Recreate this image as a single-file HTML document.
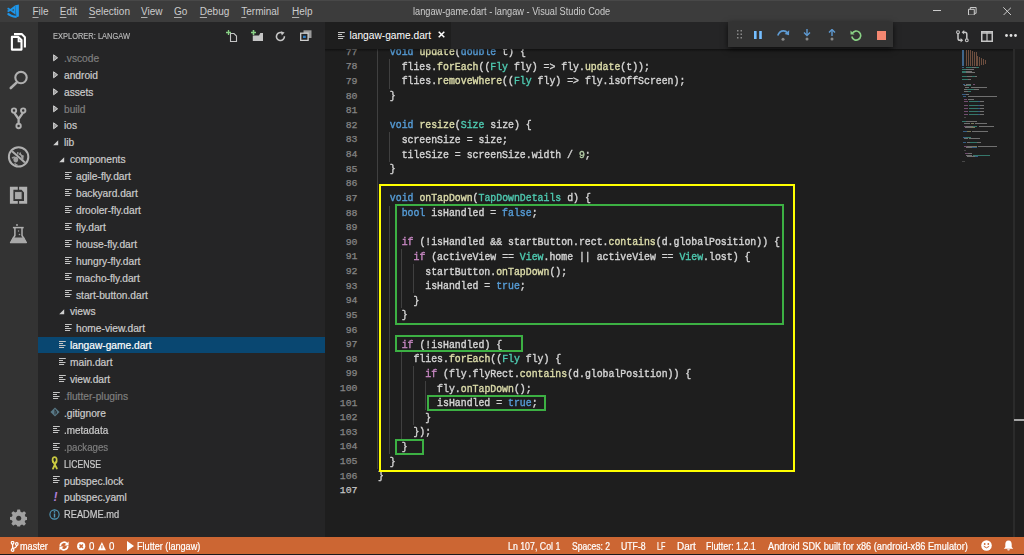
<!DOCTYPE html>
<html><head><meta charset="utf-8">
<style>
*{margin:0;padding:0;box-sizing:border-box}
html,body{width:1024px;height:555px;overflow:hidden;background:#1e1e1e;font-family:"Liberation Sans",sans-serif}
.abs{position:absolute}
#title{position:absolute;left:0;top:0;width:1024px;height:22px;background:#3c3c3c;color:#cccccc;font-size:10px}
#title .m{position:absolute;top:6.2px;line-height:12px;transform-origin:0 0;white-space:nowrap}
#title .m u{text-decoration:underline;text-underline-offset:1.5px;text-decoration-thickness:1px;text-decoration-color:#b0b0b0}
#title .tt{position:absolute;left:0;width:1024px;text-align:center;top:5px;line-height:12px;color:#cccccc}
#act{position:absolute;left:0;top:22px;width:38px;height:515px;background:#333333}
#side{position:absolute;left:38px;top:22px;width:287px;height:515px;background:#252526;color:#cccccc;font-size:10.2px}
#side .hd{position:absolute;top:8.2px;color:#bbbbbb;-webkit-text-stroke:0.15px #bbb;line-height:12px;transform-origin:0 0;white-space:nowrap}
.row{position:absolute;left:0;width:287px;height:16.91px;line-height:16.91px}
.row.sel{background:#094771;color:#ffffff}
.row.dim .nm{color:#7f7f7f}
.nm{position:absolute;top:1.8px;-webkit-text-stroke:0.2px currentColor;white-space:nowrap;transform-origin:0 0}
.tw{position:absolute;top:4.5px}
.ic{position:absolute;top:0}
.ic .fi{position:absolute;top:4.6px}
.row{color:#cccccc}
.ic.yaml{color:#b07fd8;font-weight:bold;font-style:italic;font-size:12px;top:0.8px}
#tabs{position:absolute;left:325px;top:22px;width:699px;height:27px;background:#252526}
#tab{position:absolute;left:0;top:0;width:126px;height:27px;background:#1e1e1e;color:#ffffff;font-size:10.2px}
#editor{position:absolute;left:325px;top:49px;width:699px;height:488px;background:#1e1e1e;overflow:hidden}
#code{position:absolute;left:0;top:0;width:1024px;height:537px;overflow:hidden;clip-path:inset(49px 0 0 325px)}
.ln{position:absolute;left:377.5px;height:14.62px;line-height:14.62px;font-family:"Liberation Mono",monospace;font-size:10.8px;transform:scaleX(0.9121);transform-origin:0 0;color:#d4d4d4;white-space:pre;-webkit-text-stroke:0.4px currentColor;margin-top:-0.5px}
.num{position:absolute;left:330px;width:27.5px;text-align:right;height:14.62px;line-height:14.62px;font-family:"Liberation Mono",monospace;font-size:9.87px;color:#858585;white-space:pre;-webkit-text-stroke:0.25px currentColor}
.num.act{color:#c6c6c6}
b{font-weight:normal}
b.k{color:#569cd6} b.c{color:#c586c0} b.t{color:#4ec9b0} b.f{color:#dcdcaa} b.n{color:#b5cea8}
.g{position:absolute;width:1px;height:14.62px;background:#404040}
.box{position:absolute;border:2px solid #3cb043}
#status{position:absolute;left:0;top:537px;width:1024px;height:17px;background:#cc6633;color:#ffffff;font-size:10px}
#status .s{position:absolute;top:2.9px;line-height:13px;white-space:nowrap;transform-origin:0 0;-webkit-text-stroke:0.2px #fff}
.s{transform-origin:0 0}
#bottomline{position:absolute;left:0;top:554px;width:1024px;height:1px;background:#1a1a1a}
#dbg{position:absolute;left:728px;top:22px;width:165px;height:24.5px;background:#333333;box-shadow:0 2px 6px rgba(0,0,0,0.7)}
</style></head><body>
<div id="title"><div class="abs" style="left:0;top:0;width:1024px;height:1px;background:#484848"></div><svg class="abs" style="left:0;top:0" width="26" height="22" viewBox="0 0 26 22"><path d="M15.4 5.2L18.9 4.6V16.6L16.4 17.3Z" fill="#1e95e8"/><path d="M7.8 13.4Q10 16.2 16.6 16.9" fill="none" stroke="#1e95e8" stroke-width="2.2"/><path d="M10.6 9.9L14.6 6.9V12.9Z" fill="none" stroke="#1e95e8" stroke-width="1.9"/><path d="M7.6 8.2L10.6 9.9L7.6 11.6" fill="none" stroke="#1e95e8" stroke-width="1.7"/></svg><span class="m" style="left:32.5px"><u>F</u>ile</span><span class="m" style="left:59.8px"><u>E</u>dit</span><span class="m" style="left:88.8px"><u>S</u>election</span><span class="m" style="left:141.0px"><u>V</u>iew</span><span class="m" style="left:174.0px"><u>G</u>o</span><span class="m" style="left:199.8px"><u>D</u>ebug</span><span class="m" style="left:241.3px"><u>T</u>erminal</span><span class="m" style="left:292.0px"><u>H</u>elp</span><span class="m" style="left:413.20px;font-size:10.00px;transform:scaleX(0.9199);">langaw-game.dart - langaw - Visual Studio Code</span><svg class="abs" style="left:932.7px;top:10px" width="8.6" height="1"><rect width="8.6" height="1" fill="#cccccc"/></svg><svg class="abs" style="left:968px;top:6.8px" width="8.6" height="8.6" viewBox="0 0 8.6 8.6"><path d="M0.5 2.3H6.3V8.1H0.5Z M2.3 2.3V0.5H8.1V6.3H6.3" fill="none" stroke="#cccccc" stroke-width="1"/></svg><svg class="abs" style="left:1002.8px;top:6.8px" width="8.6" height="8.6" viewBox="0 0 8.6 8.6"><path d="M0.3 0.3L8.3 8.3M8.3 0.3L0.3 8.3" stroke="#cccccc" stroke-width="1"/></svg><div class="abs" style="left:0;top:21.5px;width:1024px;height:1px;background:#303030"></div></div><div id="act"><svg class="abs" style="left:0;top:0" width="38" height="515" viewBox="0 0 38 515"><path d="M11.9 14.9H18.3L21.5 18.1V27.6H11.9Z" fill="none" stroke="#ffffff" stroke-width="2.1" stroke-linejoin="round"/><path d="M18.5 15.2V19.4H21.6" fill="none" stroke="#ffffff" stroke-width="1.7"/><path d="M14 12.1H21.7L24.9 15.3V25.5" fill="none" stroke="#ffffff" stroke-width="2.1" stroke-linejoin="round"/><circle cx="21" cy="55.6" r="5.7" fill="none" stroke="#b0b0b0" stroke-width="2.1"/><path d="M16.8 60.4L10.8 66" stroke="#b0b0b0" stroke-width="2.6" stroke-linecap="round"/><circle cx="14" cy="88.6" r="2.2" fill="none" stroke="#b0b0b0" stroke-width="1.9"/><circle cx="23.2" cy="88.6" r="2.2" fill="none" stroke="#b0b0b0" stroke-width="1.9"/><circle cx="18.6" cy="104" r="2.2" fill="none" stroke="#b0b0b0" stroke-width="1.9"/><path d="M14.3 90.8L18.6 97L22.9 90.8M18.6 97V101.8" fill="none" stroke="#b0b0b0" stroke-width="2.3"/><circle cx="18.6" cy="134.9" r="9.7" fill="none" stroke="#b0b0b0" stroke-width="2"/><path d="M12.1 129.2L24.9 140.6" stroke="#b0b0b0" stroke-width="2"/><ellipse cx="15.8" cy="137.6" rx="2.4" ry="2.8" fill="#a0a0a0"/><path d="M12 136.2Q13.5 134.6 15 135.2M14.6 141.2Q15.5 142.8 17.5 143M17.8 130V132.5M20.5 130.5L19.8 133M23.5 133.5L21 134.5M23.5 137L21.5 136.5" fill="none" stroke="#a0a0a0" stroke-width="1.3"/><path d="M19.5 131.5L23 135L21.5 136" fill="none" stroke="#a0a0a0" stroke-width="1.6"/><path d="M9.9 164.8H17.8V167.7H13.4V178.9H17.8V181.8H9.9Z" fill="#b0b0b0"/><path d="M19.1 164.8H27.2V181.8H19.1V178.9H24V170.5L21.5 167.7H19.1Z" fill="#b0b0b0"/><rect x="14.6" y="169.6" width="7.5" height="8" fill="#a8a8a8" stroke="#333333" stroke-width="0.9"/><path d="M12.9 205.6H23.7" stroke="#b0b0b0" stroke-width="1.5"/><path d="M14.9 206V213.5L10.6 220.6H26.3L22 213.5V206" fill="none" stroke="#b0b0b0" stroke-width="1.5" stroke-linejoin="round"/><path d="M12.6 215.5H24.3L26.4 221H10.4Z" fill="#a8a8a8"/><circle cx="17" cy="203" r="0.9" fill="#b0b0b0"/><circle cx="18.5" cy="209" r="0.7" fill="#a0a0a0"/><circle cx="19.5" cy="212.5" r="0.8" fill="#a0a0a0"/></svg><svg class="abs" style="left:9.7px;top:487.4px" width="17.4" height="17.4" viewBox="0 0 18 18"><path d="M7.6 0.5H10.4L10.9 2.8L12.6 3.5L14.6 2.2L16.6 4.2L15.3 6.2L16 7.9L18 8.4V11.2L15.9 11.6L15.2 13.3L16.5 15.3L14.5 17.3L12.5 16L10.8 16.7L10.4 18H7.6L7.1 16.7L5.4 16L3.4 17.3L1.4 15.3L2.7 13.3L2 11.6L0 11.2V8.4L2 7.9L2.7 6.2L1.4 4.2L3.4 2.2L5.4 3.5L7.1 2.8Z" fill="#a0a0a0"/><circle cx="9" cy="9.5" r="2.6" fill="#333333"/></svg></div><div id="side"><span class="hd" style="left:15.40px;font-size:9.20px;transform:scaleX(0.8148);">EXPLORER: LANGAW</span><svg class="abs" style="left:188px;top:8px" width="12" height="12" viewBox="0 0 12 12"><path d="M4.5 3.5H8L10.5 6V11.5H4.5Z" fill="none" stroke="#c5c5c5" stroke-width="1.1"/><path d="M2.5 0V5M0 2.5H5" stroke="#89d185" stroke-width="1.3"/></svg><svg class="abs" style="left:212.5px;top:8px" width="13" height="12" viewBox="0 0 13 12"><path d="M1.8 5.5H8L9.3 3H12V11H1.8Z" fill="#c5c5c5"/><path d="M2.5 0V5M0 2.5H5" stroke="#89d185" stroke-width="1.6"/></svg><svg class="abs" style="left:237px;top:9px" width="11" height="11" viewBox="0 0 11 11"><path d="M7.6 2.2A4 4 0 1 0 9.4 5.2" fill="none" stroke="#c5c5c5" stroke-width="1.6"/><path d="M5.8 0.2L9.6 1.6L6.8 4.4Z" fill="#c5c5c5"/></svg><svg class="abs" style="left:262px;top:8.4px" width="12" height="11" viewBox="0 0 12 11"><rect x="3.5" y="0.3" width="8" height="7.7" fill="#9a9a9a"/><rect x="0.7" y="3.2" width="7.4" height="7.2" fill="#252526" stroke="#d0d0d0" stroke-width="1.3"/><rect x="3" y="5.7" width="2.8" height="2.3" fill="#2f7fc8"/></svg><div class="row dim" style="top:27.03px"><svg class="tw" style="left:15.0px;top:5px" width="6" height="8" viewBox="0 0 6 8"><path d="M0.6 0.8L4.6 3.8L0.6 6.8Z" fill="#9a9a9a" stroke="#d0d0d0" stroke-width="1"/></svg><span class="nm" style="left:26px;transform:scaleX(1.000)">.vscode</span></div><div class="row" style="top:43.94px"><svg class="tw" style="left:15.0px;top:5px" width="6" height="8" viewBox="0 0 6 8"><path d="M0.6 0.8L4.6 3.8L0.6 6.8Z" fill="#9a9a9a" stroke="#d0d0d0" stroke-width="1"/></svg><span class="nm" style="left:26px;transform:scaleX(1.000)">android</span></div><div class="row" style="top:60.85px"><svg class="tw" style="left:15.0px;top:5px" width="6" height="8" viewBox="0 0 6 8"><path d="M0.6 0.8L4.6 3.8L0.6 6.8Z" fill="#9a9a9a" stroke="#d0d0d0" stroke-width="1"/></svg><span class="nm" style="left:26px;transform:scaleX(1.000)">assets</span></div><div class="row dim" style="top:77.76px"><svg class="tw" style="left:15.0px;top:5px" width="6" height="8" viewBox="0 0 6 8"><path d="M0.6 0.8L4.6 3.8L0.6 6.8Z" fill="#9a9a9a" stroke="#d0d0d0" stroke-width="1"/></svg><span class="nm" style="left:26px;transform:scaleX(1.000)">build</span></div><div class="row" style="top:94.67px"><svg class="tw" style="left:15.0px;top:5px" width="6" height="8" viewBox="0 0 6 8"><path d="M0.6 0.8L4.6 3.8L0.6 6.8Z" fill="#9a9a9a" stroke="#d0d0d0" stroke-width="1"/></svg><span class="nm" style="left:26px;transform:scaleX(1.000)">ios</span></div><div class="row" style="top:111.58px"><svg class="tw" style="left:15.2px;top:6.2px" width="6" height="6" viewBox="0 0 6 6"><path d="M5.2 0.2V5.2H0.2Z" fill="#d0d0d0"/></svg><span class="nm" style="left:26px;transform:scaleX(1.000)">lib</span></div><div class="row" style="top:128.49px"><svg class="tw" style="left:21.2px;top:6.2px" width="6" height="6" viewBox="0 0 6 6"><path d="M5.2 0.2V5.2H0.2Z" fill="#d0d0d0"/></svg><span class="nm" style="left:32px;transform:scaleX(1.000)">components</span></div><div class="row" style="top:145.40px"><span class="ic" style="left:27px"><svg class="fi" width="8" height="8" viewBox="0 0 8 8"><path d="M0 0.5h6.8M0 2.5h4M0 4.5h6.5M0 6.5h5.1" stroke="#c5c5c5" stroke-width="1.2"/></svg></span><span class="nm" style="left:38px;transform:scaleX(1.000)">agile-fly.dart</span></div><div class="row" style="top:162.31px"><span class="ic" style="left:27px"><svg class="fi" width="8" height="8" viewBox="0 0 8 8"><path d="M0 0.5h6.8M0 2.5h4M0 4.5h6.5M0 6.5h5.1" stroke="#c5c5c5" stroke-width="1.2"/></svg></span><span class="nm" style="left:38px;transform:scaleX(1.000)">backyard.dart</span></div><div class="row" style="top:179.22px"><span class="ic" style="left:27px"><svg class="fi" width="8" height="8" viewBox="0 0 8 8"><path d="M0 0.5h6.8M0 2.5h4M0 4.5h6.5M0 6.5h5.1" stroke="#c5c5c5" stroke-width="1.2"/></svg></span><span class="nm" style="left:38px;transform:scaleX(1.000)">drooler-fly.dart</span></div><div class="row" style="top:196.13px"><span class="ic" style="left:27px"><svg class="fi" width="8" height="8" viewBox="0 0 8 8"><path d="M0 0.5h6.8M0 2.5h4M0 4.5h6.5M0 6.5h5.1" stroke="#c5c5c5" stroke-width="1.2"/></svg></span><span class="nm" style="left:38px;transform:scaleX(1.000)">fly.dart</span></div><div class="row" style="top:213.04px"><span class="ic" style="left:27px"><svg class="fi" width="8" height="8" viewBox="0 0 8 8"><path d="M0 0.5h6.8M0 2.5h4M0 4.5h6.5M0 6.5h5.1" stroke="#c5c5c5" stroke-width="1.2"/></svg></span><span class="nm" style="left:38px;transform:scaleX(1.000)">house-fly.dart</span></div><div class="row" style="top:229.95px"><span class="ic" style="left:27px"><svg class="fi" width="8" height="8" viewBox="0 0 8 8"><path d="M0 0.5h6.8M0 2.5h4M0 4.5h6.5M0 6.5h5.1" stroke="#c5c5c5" stroke-width="1.2"/></svg></span><span class="nm" style="left:38px;transform:scaleX(1.000)">hungry-fly.dart</span></div><div class="row" style="top:246.86px"><span class="ic" style="left:27px"><svg class="fi" width="8" height="8" viewBox="0 0 8 8"><path d="M0 0.5h6.8M0 2.5h4M0 4.5h6.5M0 6.5h5.1" stroke="#c5c5c5" stroke-width="1.2"/></svg></span><span class="nm" style="left:38px;transform:scaleX(1.000)">macho-fly.dart</span></div><div class="row" style="top:263.77px"><span class="ic" style="left:27px"><svg class="fi" width="8" height="8" viewBox="0 0 8 8"><path d="M0 0.5h6.8M0 2.5h4M0 4.5h6.5M0 6.5h5.1" stroke="#c5c5c5" stroke-width="1.2"/></svg></span><span class="nm" style="left:38px;transform:scaleX(1.000)">start-button.dart</span></div><div class="row" style="top:280.68px"><svg class="tw" style="left:21.2px;top:6.2px" width="6" height="6" viewBox="0 0 6 6"><path d="M5.2 0.2V5.2H0.2Z" fill="#d0d0d0"/></svg><span class="nm" style="left:32px;transform:scaleX(1.000)">views</span></div><div class="row" style="top:297.59px"><span class="ic" style="left:27px"><svg class="fi" width="8" height="8" viewBox="0 0 8 8"><path d="M0 0.5h6.8M0 2.5h4M0 4.5h6.5M0 6.5h5.1" stroke="#c5c5c5" stroke-width="1.2"/></svg></span><span class="nm" style="left:38px;transform:scaleX(1.000)">home-view.dart</span></div><div class="row sel" style="top:314.50px"><span class="ic" style="left:21px"><svg class="fi" width="8" height="8" viewBox="0 0 8 8"><path d="M0 0.5h6.8M0 2.5h4M0 4.5h6.5M0 6.5h5.1" stroke="#c5c5c5" stroke-width="1.2"/></svg></span><span class="nm" style="left:32px;transform:scaleX(1.000)">langaw-game.dart</span></div><div class="row" style="top:331.41px"><span class="ic" style="left:21px"><svg class="fi" width="8" height="8" viewBox="0 0 8 8"><path d="M0 0.5h6.8M0 2.5h4M0 4.5h6.5M0 6.5h5.1" stroke="#c5c5c5" stroke-width="1.2"/></svg></span><span class="nm" style="left:32px;transform:scaleX(1.000)">main.dart</span></div><div class="row" style="top:348.32px"><span class="ic" style="left:21px"><svg class="fi" width="8" height="8" viewBox="0 0 8 8"><path d="M0 0.5h6.8M0 2.5h4M0 4.5h6.5M0 6.5h5.1" stroke="#c5c5c5" stroke-width="1.2"/></svg></span><span class="nm" style="left:32px;transform:scaleX(1.000)">view.dart</span></div><div class="row dim" style="top:365.23px"><span class="ic" style="left:15px"><svg class="fi" width="8" height="8" viewBox="0 0 8 8"><path d="M0 0.5h6.8M0 2.5h4M0 4.5h6.5M0 6.5h5.1" stroke="#c5c5c5" stroke-width="1.2"/></svg></span><span class="nm" style="left:26px;transform:scaleX(1.000)">.flutter-plugins</span></div><div class="row" style="top:382.14px"><svg class="tw" style="left:11.5px;top:3.3px" width="10" height="10" viewBox="0 0 10 10"><path d="M5 0.4L9.6 5L5 9.6L0.4 5Z" fill="#587886"/><path d="M5 2.6L6.4 4.5M5 2.6V7.6M6.4 4.5V6.6" stroke="#252526" stroke-width="0.9"/></svg><span class="nm" style="left:26px;transform:scaleX(1.000)">.gitignore</span></div><div class="row" style="top:399.05px"><span class="ic" style="left:15px"><svg class="fi" width="8" height="8" viewBox="0 0 8 8"><path d="M0 0.5h6.8M0 2.5h4M0 4.5h6.5M0 6.5h5.1" stroke="#c5c5c5" stroke-width="1.2"/></svg></span><span class="nm" style="left:26px;transform:scaleX(0.975)">.metadata</span></div><div class="row dim" style="top:415.96px"><span class="ic" style="left:15px"><svg class="fi" width="8" height="8" viewBox="0 0 8 8"><path d="M0 0.5h6.8M0 2.5h4M0 4.5h6.5M0 6.5h5.1" stroke="#c5c5c5" stroke-width="1.2"/></svg></span><span class="nm" style="left:26px;transform:scaleX(0.950)">.packages</span></div><div class="row" style="top:432.87px"><svg class="tw" style="left:13.0px;top:1.1px" width="8" height="14" viewBox="0 0 8 14"><path d="M2 6.6Q0.6 1.2 3.6 1.2Q6.6 1.2 5.3 6.6" fill="none" stroke="#cbcb41" stroke-width="1.7"/><path d="M5.3 5.6L2 12.6M2.2 5.6L5.8 12.4" fill="none" stroke="#cbcb41" stroke-width="1.9" stroke-linecap="round"/></svg><span class="nm" style="left:26px;transform:scaleX(0.850)">LICENSE</span></div><div class="row" style="top:449.78px"><span class="ic" style="left:15px"><svg class="fi" width="8" height="8" viewBox="0 0 8 8"><path d="M0 0.5h6.8M0 2.5h4M0 4.5h6.5M0 6.5h5.1" stroke="#c5c5c5" stroke-width="1.2"/></svg></span><span class="nm" style="left:26px;transform:scaleX(1.000)">pubspec.lock</span></div><div class="row" style="top:466.69px"><span class="ic yaml" style="left:15.4px">!</span><span class="nm" style="left:26px;transform:scaleX(1.000)">pubspec.yaml</span></div><div class="row" style="top:483.60px"><svg class="tw" style="left:11px;top:3px" width="11" height="11" viewBox="0 0 11 11"><circle cx="5.5" cy="5.5" r="4.6" fill="none" stroke="#519aba" stroke-width="1.1"/><path d="M5.5 4.5V8.5" stroke="#519aba" stroke-width="1.4"/><circle cx="5.5" cy="2.9" r="0.8" fill="#519aba"/></svg><span class="nm" style="left:26px;transform:scaleX(0.910)">README.md</span></div></div><div id="tabs"><div id="tab"><svg class="abs" style="left:13px;top:9.8px" width="8" height="8" viewBox="0 0 8 8"><path d="M0 0.5h6.8M0 2.5h4M0 4.5h6.5M0 6.5h5.1" stroke="#c5c5c5" stroke-width="1.2"/></svg><span class="abs" style="left:24.5px;top:8.2px;line-height:12px">langaw-game.dart</span><svg class="abs" style="left:112.5px;top:9px" width="7" height="7" viewBox="0 0 7 7"><path d="M0.7 0.7L6.3 6.3M6.3 0.7L0.7 6.3" stroke="#ffffff" stroke-width="1.5"/></svg></div><svg class="abs" style="left:631px;top:7.5px" width="13" height="13" viewBox="0 0 13 13"><circle cx="2" cy="2.2" r="1.4" fill="none" stroke="#c5c5c5" stroke-width="1.1"/><path d="M2 3.7V8.5Q2 10.3 4 10.3H5" fill="none" stroke="#c5c5c5" stroke-width="1.5"/><path d="M4.6 8L7.2 10.3L4.6 12.6Z" fill="#c5c5c5"/><circle cx="10.8" cy="10.3" r="1.4" fill="none" stroke="#c5c5c5" stroke-width="1.1"/><path d="M10.8 8.8V4.1Q10.8 2.3 8.8 2.3H7.8" fill="none" stroke="#c5c5c5" stroke-width="1.5"/><path d="M8.2 0L5.6 2.3L8.2 4.6Z" fill="#c5c5c5"/></svg><svg class="abs" style="left:655.5px;top:8.5px" width="12" height="11" viewBox="0 0 12 11"><rect x="0.75" y="0.75" width="10.5" height="9.5" fill="none" stroke="#c5c5c5" stroke-width="1.5"/><path d="M0.5 2H11.5" stroke="#c5c5c5" stroke-width="1.5"/><path d="M6 1V10.5" stroke="#c5c5c5" stroke-width="1.2"/></svg><svg class="abs" style="left:680px;top:12px" width="12" height="3" viewBox="0 0 12 3"><circle cx="1.5" cy="1.5" r="1.4" fill="#e0e0e0"/><circle cx="6" cy="1.5" r="1.4" fill="#e0e0e0"/><circle cx="10.5" cy="1.5" r="1.4" fill="#e0e0e0"/></svg></div><div id="editor"></div><div id="code"><i class="g" style="left:377px;top:44.75px"></i><i class="g" style="left:377px;top:59.37px"></i><i class="g" style="left:389px;top:59.37px"></i><i class="g" style="left:377px;top:73.99px"></i><i class="g" style="left:389px;top:73.99px"></i><i class="g" style="left:377px;top:88.61px"></i><i class="g" style="left:377px;top:103.23px"></i><i class="g" style="left:377px;top:117.85px"></i><i class="g" style="left:377px;top:132.47px"></i><i class="g" style="left:389px;top:132.47px"></i><i class="g" style="left:377px;top:147.09px"></i><i class="g" style="left:389px;top:147.09px"></i><i class="g" style="left:377px;top:161.71px"></i><i class="g" style="left:377px;top:176.33px"></i><i class="g" style="left:377px;top:190.95px"></i><i class="g" style="left:377px;top:205.57px"></i><i class="g" style="left:389px;top:205.57px"></i><i class="g" style="left:377px;top:220.19px"></i><i class="g" style="left:389px;top:220.19px"></i><i class="g" style="left:377px;top:234.81px"></i><i class="g" style="left:389px;top:234.81px"></i><i class="g" style="left:377px;top:249.43px"></i><i class="g" style="left:389px;top:249.43px"></i><i class="g" style="left:401px;top:249.43px"></i><i class="g" style="left:377px;top:264.05px"></i><i class="g" style="left:389px;top:264.05px"></i><i class="g" style="left:401px;top:264.05px"></i><i class="g" style="left:413px;top:264.05px"></i><i class="g" style="left:377px;top:278.67px"></i><i class="g" style="left:389px;top:278.67px"></i><i class="g" style="left:401px;top:278.67px"></i><i class="g" style="left:413px;top:278.67px"></i><i class="g" style="left:377px;top:293.29px"></i><i class="g" style="left:389px;top:293.29px"></i><i class="g" style="left:401px;top:293.29px"></i><i class="g" style="left:377px;top:307.91px"></i><i class="g" style="left:389px;top:307.91px"></i><i class="g" style="left:377px;top:322.53px"></i><i class="g" style="left:389px;top:322.53px"></i><i class="g" style="left:377px;top:337.15px"></i><i class="g" style="left:389px;top:337.15px"></i><i class="g" style="left:377px;top:351.77px"></i><i class="g" style="left:389px;top:351.77px"></i><i class="g" style="left:401px;top:351.77px"></i><i class="g" style="left:377px;top:366.39px"></i><i class="g" style="left:389px;top:366.39px"></i><i class="g" style="left:401px;top:366.39px"></i><i class="g" style="left:413px;top:366.39px"></i><i class="g" style="left:377px;top:381.01px"></i><i class="g" style="left:389px;top:381.01px"></i><i class="g" style="left:401px;top:381.01px"></i><i class="g" style="left:413px;top:381.01px"></i><i class="g" style="left:425px;top:381.01px"></i><i class="g" style="left:377px;top:395.63px"></i><i class="g" style="left:389px;top:395.63px"></i><i class="g" style="left:401px;top:395.63px"></i><i class="g" style="left:413px;top:395.63px"></i><i class="g" style="left:425px;top:395.63px"></i><i class="g" style="left:377px;top:410.25px"></i><i class="g" style="left:389px;top:410.25px"></i><i class="g" style="left:401px;top:410.25px"></i><i class="g" style="left:413px;top:410.25px"></i><i class="g" style="left:377px;top:424.87px"></i><i class="g" style="left:389px;top:424.87px"></i><i class="g" style="left:401px;top:424.87px"></i><i class="g" style="left:377px;top:439.49px"></i><i class="g" style="left:389px;top:439.49px"></i><i class="g" style="left:377px;top:454.11px"></i><div class="num" style="top:45.75px">77</div><div class="num" style="top:60.37px">78</div><div class="num" style="top:74.99px">79</div><div class="num" style="top:89.61px">80</div><div class="num" style="top:104.23px">81</div><div class="num" style="top:118.85px">82</div><div class="num" style="top:133.47px">83</div><div class="num" style="top:148.09px">84</div><div class="num" style="top:162.71px">85</div><div class="num" style="top:177.33px">86</div><div class="num" style="top:191.95px">87</div><div class="num" style="top:206.57px">88</div><div class="num" style="top:221.19px">89</div><div class="num" style="top:235.81px">90</div><div class="num" style="top:250.43px">91</div><div class="num" style="top:265.05px">92</div><div class="num" style="top:279.67px">93</div><div class="num" style="top:294.29px">94</div><div class="num" style="top:308.91px">95</div><div class="num" style="top:323.53px">96</div><div class="num" style="top:338.15px">97</div><div class="num" style="top:352.77px">98</div><div class="num" style="top:367.39px">99</div><div class="num" style="top:382.01px">100</div><div class="num" style="top:396.63px">101</div><div class="num" style="top:411.25px">102</div><div class="num" style="top:425.87px">103</div><div class="num" style="top:440.49px">104</div><div class="num" style="top:455.11px">105</div><div class="num" style="top:469.73px">106</div><div class="num act" style="top:484.35px">107</div><div class="ln" style="top:45.75px">  <b class="k">void</b> <b class="f">update</b>(<b class="k">double</b> t) {</div><div class="ln" style="top:60.37px">    flies.<b class="f">forEach</b>((<b class="t">Fly</b> fly) =&gt; fly.<b class="f">update</b>(t));</div><div class="ln" style="top:74.99px">    flies.<b class="f">removeWhere</b>((<b class="t">Fly</b> fly) =&gt; fly.isOffScreen);</div><div class="ln" style="top:89.61px">  }</div><div class="ln" style="top:104.23px"></div><div class="ln" style="top:118.85px">  <b class="k">void</b> <b class="f">resize</b>(<b class="t">Size</b> size) {</div><div class="ln" style="top:133.47px">    screenSize = size;</div><div class="ln" style="top:148.09px">    tileSize = screenSize.width / <b class="n">9</b>;</div><div class="ln" style="top:162.71px">  }</div><div class="ln" style="top:177.33px"></div><div class="ln" style="top:191.95px">  <b class="k">void</b> <b class="f">onTapDown</b>(<b class="t">TapDownDetails</b> d) {</div><div class="ln" style="top:206.57px">    <b class="k">bool</b> isHandled = <b class="k">false</b>;</div><div class="ln" style="top:221.19px"></div><div class="ln" style="top:235.81px">    <b class="c">if</b> (!isHandled &amp;&amp; startButton.rect.<b class="f">contains</b>(d.globalPosition)) {</div><div class="ln" style="top:250.43px">      <b class="c">if</b> (activeView == <b class="t">View</b>.home || activeView == <b class="t">View</b>.lost) {</div><div class="ln" style="top:265.05px">        startButton.<b class="f">onTapDown</b>();</div><div class="ln" style="top:279.67px">        isHandled = <b class="k">true</b>;</div><div class="ln" style="top:294.29px">      }</div><div class="ln" style="top:308.91px">    }</div><div class="ln" style="top:323.53px"></div><div class="ln" style="top:338.15px">    <b class="c">if</b> (!isHandled) {</div><div class="ln" style="top:352.77px">      flies.<b class="f">forEach</b>((<b class="t">Fly</b> fly) {</div><div class="ln" style="top:367.39px">        <b class="c">if</b> (fly.flyRect.<b class="f">contains</b>(d.globalPosition)) {</div><div class="ln" style="top:382.01px">          fly.<b class="f">onTapDown</b>();</div><div class="ln" style="top:396.63px">          isHandled = <b class="k">true</b>;</div><div class="ln" style="top:411.25px">        }</div><div class="ln" style="top:425.87px">      });</div><div class="ln" style="top:440.49px">    }</div><div class="ln" style="top:455.11px">  }</div><div class="ln" style="top:469.73px">}</div><div class="ln" style="top:484.35px"></div></div><div class="abs" style="left:325px;top:49px;width:688px;height:3px;background:linear-gradient(rgba(0,0,0,0.45),rgba(0,0,0,0))"></div><div class="abs" style="left:1013px;top:49px;width:1.5px;height:488px;background:#2b2b2b"></div><div class="abs" style="left:1014px;top:419px;width:10px;height:1.7px;background:#a5a5a5"></div><div style="position:absolute;left:0;top:0;width:1024px;height:555px;filter:blur(0.45px);opacity:0.75"><i style="position:absolute;left:962px;top:67.3px;width:2px;height:1px;background:#3f74a6"></i><i style="position:absolute;left:966px;top:67.3px;width:6px;height:1px;background:#3d9585"></i><i style="position:absolute;left:972px;top:67.3px;width:4px;height:1px;background:#8c8c8c"></i><i style="position:absolute;left:976px;top:67.3px;width:3px;height:1px;background:#3d9585"></i><i style="position:absolute;left:962px;top:69.0px;width:4px;height:1px;background:#3d9585"></i><i style="position:absolute;left:966px;top:69.0px;width:8px;height:1px;background:#8c8c8c"></i><i style="position:absolute;left:962px;top:70.5px;width:4px;height:1px;background:#3d9585"></i><i style="position:absolute;left:966px;top:70.5px;width:6px;height:1px;background:#8c8c8c"></i><i style="position:absolute;left:962px;top:72.0px;width:4px;height:1px;background:#3d9585"></i><i style="position:absolute;left:966px;top:72.0px;width:9px;height:1px;background:#8c8c8c"></i><i style="position:absolute;left:962px;top:75.5px;width:5px;height:1px;background:#3d9585"></i><i style="position:absolute;left:967px;top:75.5px;width:5px;height:1px;background:#8c8c8c"></i><i style="position:absolute;left:972px;top:75.5px;width:3px;height:1px;background:#3d9585"></i><i style="position:absolute;left:975px;top:75.5px;width:2px;height:1px;background:#8c8c8c"></i><i style="position:absolute;left:962px;top:79.0px;width:6px;height:1px;background:#3d9585"></i><i style="position:absolute;left:968px;top:79.0px;width:3px;height:1px;background:#8c8c8c"></i><i style="position:absolute;left:963px;top:83.5px;width:2px;height:1px;background:#3f74a6"></i><i style="position:absolute;left:966px;top:83.5px;width:5px;height:1px;background:#8c8c8c"></i><i style="position:absolute;left:973px;top:83.5px;width:2px;height:1px;background:#8f5f8c"></i><i style="position:absolute;left:964px;top:85.0px;width:3px;height:1px;background:#8c8c8c"></i><i style="position:absolute;left:967px;top:85.0px;width:4px;height:1px;background:#3d9585"></i><i style="position:absolute;left:965px;top:86.5px;width:4px;height:1px;background:#8c8c8c"></i><i style="position:absolute;left:971px;top:86.5px;width:16px;height:1px;background:#8c8c8c"></i><i style="position:absolute;left:964px;top:89.0px;width:3px;height:1px;background:#8c8c8c"></i><i style="position:absolute;left:967px;top:89.0px;width:7px;height:1px;background:#3d9585"></i><i style="position:absolute;left:974px;top:89.0px;width:5px;height:1px;background:#8c8c8c"></i><i style="position:absolute;left:964px;top:90.5px;width:4px;height:1px;background:#8c8c8c"></i><i style="position:absolute;left:968px;top:90.5px;width:3px;height:1px;background:#3d9585"></i><i style="position:absolute;left:962px;top:94.0px;width:4px;height:1px;background:#3f74a6"></i><i style="position:absolute;left:966px;top:94.0px;width:3px;height:1px;background:#8c8c8c"></i><i style="position:absolute;left:963px;top:95.5px;width:3px;height:1px;background:#3f74a6"></i><i style="position:absolute;left:968px;top:95.5px;width:29px;height:1px;background:#8c8c8c"></i><i style="position:absolute;left:964px;top:98.5px;width:3px;height:1px;background:#8f5f8c"></i><i style="position:absolute;left:968px;top:98.5px;width:6px;height:1px;background:#8c8c8c"></i><i style="position:absolute;left:964px;top:101.2px;width:4px;height:1px;background:#8f5f8c"></i><i style="position:absolute;left:969px;top:101.2px;width:9px;height:1px;background:#3d9585"></i><i style="position:absolute;left:978px;top:101.2px;width:2px;height:1px;background:#3f74a6"></i><i style="position:absolute;left:980px;top:101.2px;width:4px;height:1px;background:#8c8c8c"></i><i style="position:absolute;left:964px;top:104.5px;width:4px;height:1px;background:#8f5f8c"></i><i style="position:absolute;left:969px;top:104.5px;width:9px;height:1px;background:#3d9585"></i><i style="position:absolute;left:978px;top:104.5px;width:2px;height:1px;background:#3f74a6"></i><i style="position:absolute;left:980px;top:104.5px;width:4px;height:1px;background:#8c8c8c"></i><i style="position:absolute;left:964px;top:107.7px;width:4px;height:1px;background:#8f5f8c"></i><i style="position:absolute;left:969px;top:107.7px;width:9px;height:1px;background:#3d9585"></i><i style="position:absolute;left:978px;top:107.7px;width:2px;height:1px;background:#3f74a6"></i><i style="position:absolute;left:980px;top:107.7px;width:4px;height:1px;background:#8c8c8c"></i><i style="position:absolute;left:964px;top:110.9px;width:4px;height:1px;background:#8f5f8c"></i><i style="position:absolute;left:969px;top:110.9px;width:9px;height:1px;background:#3d9585"></i><i style="position:absolute;left:978px;top:110.9px;width:2px;height:1px;background:#3f74a6"></i><i style="position:absolute;left:980px;top:110.9px;width:4px;height:1px;background:#8c8c8c"></i><i style="position:absolute;left:964px;top:114.2px;width:4px;height:1px;background:#8f5f8c"></i><i style="position:absolute;left:969px;top:114.2px;width:9px;height:1px;background:#3d9585"></i><i style="position:absolute;left:978px;top:114.2px;width:2px;height:1px;background:#3f74a6"></i><i style="position:absolute;left:980px;top:114.2px;width:4px;height:1px;background:#8c8c8c"></i><i style="position:absolute;left:962px;top:120.5px;width:4px;height:1px;background:#3d9585"></i><i style="position:absolute;left:966px;top:120.5px;width:11px;height:1px;background:#8c8c8c"></i><i style="position:absolute;left:964px;top:122.5px;width:6px;height:1px;background:#8c8c8c"></i><i style="position:absolute;left:971px;top:122.5px;width:3px;height:1px;background:#9a9a70"></i><i style="position:absolute;left:975px;top:122.5px;width:12px;height:1px;background:#8c8c8c"></i><i style="position:absolute;left:964px;top:125.5px;width:2px;height:1px;background:#8f5f8c"></i><i style="position:absolute;left:966px;top:125.5px;width:7px;height:1px;background:#8c8c8c"></i><i style="position:absolute;left:973px;top:125.5px;width:4px;height:1px;background:#3d9585"></i><i style="position:absolute;left:979px;top:125.5px;width:15px;height:1px;background:#8c8c8c"></i><i style="position:absolute;left:965px;top:127.0px;width:6px;height:1px;background:#8c8c8c"></i><i style="position:absolute;left:971px;top:127.0px;width:4px;height:1px;background:#9a9a70"></i><i style="position:absolute;left:963px;top:130.5px;width:4px;height:1px;background:#3f74a6"></i><i style="position:absolute;left:967px;top:130.5px;width:4px;height:1px;background:#9a9a70"></i><i style="position:absolute;left:972px;top:130.5px;width:16px;height:1px;background:#8c8c8c"></i><i style="position:absolute;left:963px;top:136.5px;width:3px;height:1px;background:#3f74a6"></i><i style="position:absolute;left:966px;top:136.5px;width:5px;height:1px;background:#3d9585"></i><i style="position:absolute;left:964px;top:138.0px;width:4px;height:1px;background:#8c8c8c"></i><i style="position:absolute;left:969px;top:138.0px;width:11px;height:1px;background:#8c8c8c"></i><i style="position:absolute;left:963px;top:142.0px;width:3px;height:1px;background:#3f74a6"></i><i style="position:absolute;left:967px;top:142.0px;width:3px;height:1px;background:#8c8c8c"></i><i style="position:absolute;left:970px;top:142.0px;width:7px;height:1px;background:#3d9585"></i><i style="position:absolute;left:977px;top:142.0px;width:4px;height:1px;background:#8c8c8c"></i><i style="position:absolute;left:964px;top:145.5px;width:3px;height:1px;background:#8f5f8c"></i><i style="position:absolute;left:967px;top:145.5px;width:6px;height:1px;background:#8c8c8c"></i><i style="position:absolute;left:973px;top:145.5px;width:4px;height:1px;background:#9a9a70"></i><i style="position:absolute;left:978px;top:145.5px;width:19px;height:1px;background:#8c8c8c"></i><i style="position:absolute;left:966px;top:147.0px;width:6px;height:1px;background:#8c8c8c"></i><i style="position:absolute;left:972px;top:147.0px;width:5px;height:1px;background:#3f74a6"></i><i style="position:absolute;left:965px;top:153.0px;width:3px;height:1px;background:#8f5f8c"></i><i style="position:absolute;left:968px;top:153.0px;width:4px;height:1px;background:#8c8c8c"></i><i style="position:absolute;left:966px;top:154.5px;width:6px;height:1px;background:#8c8c8c"></i><i style="position:absolute;left:973px;top:154.5px;width:17px;height:1px;background:#3d9585"></i><i style="position:absolute;left:967px;top:156.0px;width:8px;height:1px;background:#8c8c8c"></i><i style="position:absolute;left:975px;top:156.0px;width:3px;height:1px;background:#3f74a6"></i><i style="position:absolute;left:962px;top:49.5px;width:2px;height:16px;background:#4a7eb0"></i><i style="position:absolute;left:965.5px;top:49.5px;width:1.2px;height:16.0px;background:#9c6b52;opacity:0.85"></i><i style="position:absolute;left:967.5px;top:50.0px;width:1.2px;height:15.5px;background:#9c6b52;opacity:0.85"></i><i style="position:absolute;left:969.5px;top:49.5px;width:1.2px;height:16.0px;background:#9c6b52;opacity:0.85"></i><i style="position:absolute;left:971.5px;top:51.0px;width:1.2px;height:14.5px;background:#9c6b52;opacity:0.85"></i><i style="position:absolute;left:973.5px;top:52.0px;width:1.2px;height:13.5px;background:#9c6b52;opacity:0.85"></i><i style="position:absolute;left:975.5px;top:52.0px;width:1.2px;height:13.5px;background:#9c6b52;opacity:0.85"></i><i style="position:absolute;left:977.0px;top:56.0px;width:1.2px;height:9.5px;background:#9c6b52;opacity:0.85"></i><i style="position:absolute;left:979.0px;top:57.0px;width:1.2px;height:8.5px;background:#9c6b52;opacity:0.85"></i><i style="position:absolute;left:981.0px;top:58.0px;width:1.2px;height:7.0px;background:#9c6b52;opacity:0.85"></i><i style="position:absolute;left:983.0px;top:59.0px;width:1.2px;height:6.0px;background:#9c6b52;opacity:0.85"></i><i style="position:absolute;left:985.0px;top:60.0px;width:1.2px;height:4.0px;background:#9c6b52;opacity:0.85"></i><i style="position:absolute;left:964px;top:117.0px;width:2px;height:1px;background:#555"></i><i style="position:absolute;left:964px;top:150.0px;width:2px;height:1px;background:#555"></i><i style="position:absolute;left:962px;top:160.5px;width:3px;height:1px;background:#555"></i></div><div class="box" style="border-color:#ffff00;left:379px;top:184px;width:416px;height:288px"></div><div class="box" style="left:395px;top:204px;width:389px;height:121px"></div><div class="box" style="left:395px;top:335px;width:128px;height:17px"></div><div class="box" style="left:427px;top:394.5px;width:119px;height:16.5px"></div><div class="box" style="left:395px;top:439px;width:29px;height:15.5px"></div><div id="dbg"><svg class="abs" style="left:8.5px;top:8px" width="6" height="9" viewBox="0 0 6 9"><g fill="#8a8a8a"><rect x="0" y="0" width="1.5" height="1.5"/><rect x="3.5" y="0" width="1.5" height="1.5"/><rect x="0" y="3.5" width="1.5" height="1.5"/><rect x="3.5" y="3.5" width="1.5" height="1.5"/><rect x="0" y="7" width="1.5" height="1.5"/><rect x="3.5" y="7" width="1.5" height="1.5"/></g></svg><svg class="abs" style="left:26px;top:9px" width="8" height="8" viewBox="0 0 8 8"><rect x="0" y="0" width="2.6" height="8" fill="#75beff"/><rect x="5.2" y="0" width="2.6" height="8" fill="#75beff"/></svg><svg class="abs" style="left:48.5px;top:7px" width="13" height="12" viewBox="0 0 13 12"><path d="M0.8 6.5Q2.5 1.8 6.5 1.8Q9 1.8 10.2 3.8" fill="none" stroke="#5f9bd3" stroke-width="1.7"/><path d="M12.2 1.2L12 6.2L7.6 5Z" fill="#5f9bd3"/><circle cx="6" cy="10.2" r="1.5" fill="#8a8a8a"/></svg><svg class="abs" style="left:75px;top:7px" width="8" height="12" viewBox="0 0 8 12"><path d="M4 0V6" stroke="#5f9bd3" stroke-width="1.4"/><path d="M1 3.5L4 6.5L7 3.5" fill="none" stroke="#5f9bd3" stroke-width="1.4"/><circle cx="4" cy="10" r="1.5" fill="#8a8a8a"/></svg><svg class="abs" style="left:99.5px;top:7px" width="8" height="12" viewBox="0 0 8 12"><path d="M4 7V1" stroke="#5f9bd3" stroke-width="1.4"/><path d="M1 3.5L4 0.5L7 3.5" fill="none" stroke="#5f9bd3" stroke-width="1.4"/><circle cx="4" cy="10" r="1.5" fill="#8a8a8a"/></svg><svg class="abs" style="left:122px;top:7px" width="12" height="12" viewBox="0 0 12 12"><path d="M2.2 4.5A4.5 4.5 0 1 1 1.8 7.5" fill="none" stroke="#89d185" stroke-width="1.6"/><path d="M0.5 1.5V5.5H4.5Z" fill="#89d185"/></svg><svg class="abs" style="left:148.5px;top:9px" width="9" height="9"><rect width="9" height="9" fill="#f48771"/></svg></div><div id="status"><svg class="abs" style="left:9.5px;top:3.8px" width="9" height="11" viewBox="0 0 9 11"><circle cx="2.6" cy="1.8" r="1.3" fill="none" stroke="#fff" stroke-width="1.2"/><circle cx="6.8" cy="3" r="1.3" fill="none" stroke="#fff" stroke-width="1.2"/><circle cx="2.6" cy="9" r="1.3" fill="none" stroke="#fff" stroke-width="1.2"/><path d="M2.6 3.1V7.7M6.8 4.3Q6.6 6.8 2.6 7.7" fill="none" stroke="#fff" stroke-width="1.3"/></svg><span class="s" style="left:20.00px;font-size:10.00px;transform:scaleX(0.9129);">master</span><svg class="abs" style="left:58.8px;top:3.9px" width="10" height="10" viewBox="0 0 10 10"><path d="M1.3 5A3.7 3.7 0 0 1 8 2.8" fill="none" stroke="#fff" stroke-width="1.7"/><path d="M8.7 5A3.7 3.7 0 0 1 2 7.2" fill="none" stroke="#fff" stroke-width="1.7"/><path d="M9.6 0.4V4.6H5.4Z M0.4 9.6V5.4H4.6Z" fill="#fff"/></svg><svg class="abs" style="left:77.1px;top:5px" width="9" height="9" viewBox="0 0 9 9"><circle cx="4.2" cy="4.2" r="4.1" fill="#fff"/><path d="M2.5 2.5L5.9 5.9M5.9 2.5L2.5 5.9" stroke="#cc6633" stroke-width="1.5"/></svg><span class="s" style="left:89.00px;font-size:10.00px;transform:scaleX(0.9710);">0</span><svg class="abs" style="left:97.6px;top:4.7px" width="9" height="9" viewBox="0 0 9 9"><path d="M3.9 0.1L7.9 8.3H-0.1Z" fill="#fff"/><path d="M3.9 3.2V6.4" stroke="#cc6633" stroke-width="1"/></svg><span class="s" style="left:109.20px;font-size:10.00px;transform:scaleX(0.9710);">0</span><svg class="abs" style="left:127px;top:3.8px" width="8" height="10" viewBox="0 0 8 10"><path d="M0 0L7 5L0 10Z" fill="#fff"/></svg><span class="s" style="left:137.00px;font-size:10.00px;transform:scaleX(0.9112);">Flutter (langaw)</span><span class="s" style="left:508.40px;font-size:10.00px;transform:scaleX(0.8792);">Ln 107, Col 1</span><span class="s" style="left:571.80px;font-size:10.00px;transform:scaleX(0.8567);">Spaces: 2</span><span class="s" style="left:620.80px;font-size:10.00px;transform:scaleX(0.8719);">UTF-8</span><span class="s" style="left:656.90px;font-size:10.00px;transform:scaleX(0.7198);">LF</span><span class="s" style="left:676.50px;font-size:10.00px;transform:scaleX(0.9951);">Dart</span><span class="s" style="left:705.50px;font-size:10.00px;transform:scaleX(0.8871);">Flutter: 1.2.1</span><span class="s" style="left:767.70px;font-size:10.00px;transform:scaleX(0.9194);">Android SDK built for x86 (android-x86 Emulator)</span><svg class="abs" style="left:980.5px;top:3px" width="11" height="11" viewBox="0 0 11 11"><circle cx="5.5" cy="5.5" r="5.3" fill="#fff"/><circle cx="3.7" cy="4" r="0.9" fill="#cc6633"/><circle cx="7.3" cy="4" r="0.9" fill="#cc6633"/><path d="M2.8 6.3Q5.5 9.3 8.2 6.3" fill="none" stroke="#cc6633" stroke-width="1"/></svg><svg class="abs" style="left:1003px;top:3px" width="11" height="11" viewBox="0 0 11 11"><path d="M5.5 0.5C3 0.5 2.3 2.5 2.3 4.5V7L0.8 8.7H10.2L8.7 7V4.5C8.7 2.5 8 0.5 5.5 0.5Z" fill="#fff"/><path d="M4.2 9.3H6.8A1.3 1.3 0 0 1 4.2 9.3Z" fill="#fff"/></svg></div><div id="bottomline"></div></body></html>
